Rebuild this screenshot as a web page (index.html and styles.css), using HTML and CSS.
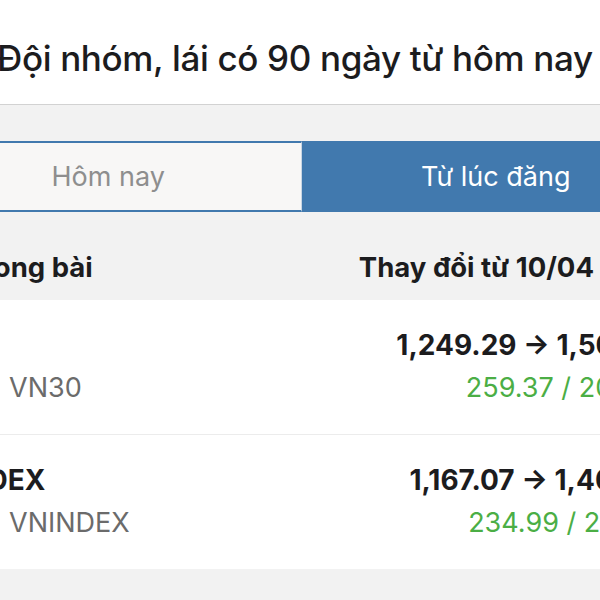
FILE: index.html
```html
<!DOCTYPE html>
<html lang="vi">
<head>
<meta charset="utf-8">
<link rel="stylesheet" href="styles.css">
</head>
<body>
<div class="screen">
  <header class="title-bar">
    <h1 class="title">Đội nhóm, lái có 90 ngày từ hôm nay</h1>
  </header>
  <section class="controls">
    <div class="tabs">
      <div class="tab">Hôm nay</div>
      <div class="tab active">Từ lúc đăng</div>
    </div>
    <div class="table-head">
      <span class="head-left">Chỉ số trong bài</span>
      <span class="head-right">Thay đổi từ 10/04</span>
    </div>
  </section>
  <section class="list">
    <div class="row">
      <div class="cell-left">
        <div class="name">&nbsp;</div>
        <div class="code">VN30</div>
      </div>
      <div class="cell-right">
        <div class="value">1,249.29 → 1,508.66</div>
        <div class="change">259.37 / 20.76%</div>
      </div>
    </div>
    <div class="row">
      <div class="cell-left">
        <div class="name">VNINDEX</div>
        <div class="code">VNINDEX</div>
      </div>
      <div class="cell-right">
        <div class="value">1,167.07 → 1,402.06</div>
        <div class="change">234.99 / 20.14%</div>
      </div>
    </div>
  </section>
  <div class="footer-space"></div>
</div>
</body>
</html>
```
FILE: styles.css
```css
html, body {
  margin: 0;
  padding: 0;
  background: #f2f2f2;
  overflow: hidden;
  width: 600px;
  height: 600px;
}

.screen {
  width: 800px;
  margin-left: -100px;
  font-family: Inter, "Noto Sans", sans-serif;
  color: #1c1c1e;
}

.title-bar {
  background: #ffffff;
  height: 105px;
  border-bottom: 1px solid #d2d2d2;
  padding-left: 97px;
  box-sizing: border-box;
}

.title {
  margin: 0;
  padding-top: 37px;
  font-size: 35px;
  font-weight: 500;
  line-height: 42px;
  white-space: nowrap;
  letter-spacing: -0.35px;
}

.controls {
  background: #f2f2f2;
  padding-top: 36px;
}

.tabs {
  display: flex;
  height: 71px;
  margin-left: 14px;
  margin-right: 10px;
}

.tab {
  flex: 1;
  display: flex;
  align-items: center;
  justify-content: center;
  font-size: 27px;
  color: #8e8e8e;
  background: #f8f7f6;
  border: 2px solid #4179ae;
  border-right: 1px solid #c9d6e3;
  box-sizing: border-box;
}

.tab.active {
  background: #4179ae;
  color: #ffffff;
  border: 2px solid #4179ae;
}

.table-head {
  display: flex;
  justify-content: space-between;
  align-items: flex-start;
  height: 88px;
  box-sizing: border-box;
  padding-top: 38px;
  font-size: 27.5px;
  font-weight: 700;
  line-height: 34px;
  white-space: nowrap;
}

.head-left {
  margin-left: -17px;
}

.head-right {
  margin-right: 106px;
}

.list {
  background: #ffffff;
}

.row {
  display: flex;
  justify-content: space-between;
  height: 135px;
  box-sizing: border-box;
  padding: 29px 23px 0 0;
  border-bottom: 1px solid #ececec;
  white-space: nowrap;
}

.row:last-child {
  border-bottom: none;
  height: 134px;
}

.cell-left, .cell-right {
  display: flex;
  flex-direction: column;
  gap: 11px;
}

.cell-right {
  align-items: flex-end;
}

.name, .value {
  font-size: 28px;
  font-weight: 700;
  line-height: 32px;
}

.name {
  padding-left: 16px;
}

.code, .change {
  font-size: 27px;
  font-weight: 400;
  line-height: 32px;
}

.code {
  color: #6b6b6b;
  padding-left: 109px;
}

.change {
  color: #4bae45;
}

.footer-space {
  height: 40px;
  background: #f2f2f2;
}
```
